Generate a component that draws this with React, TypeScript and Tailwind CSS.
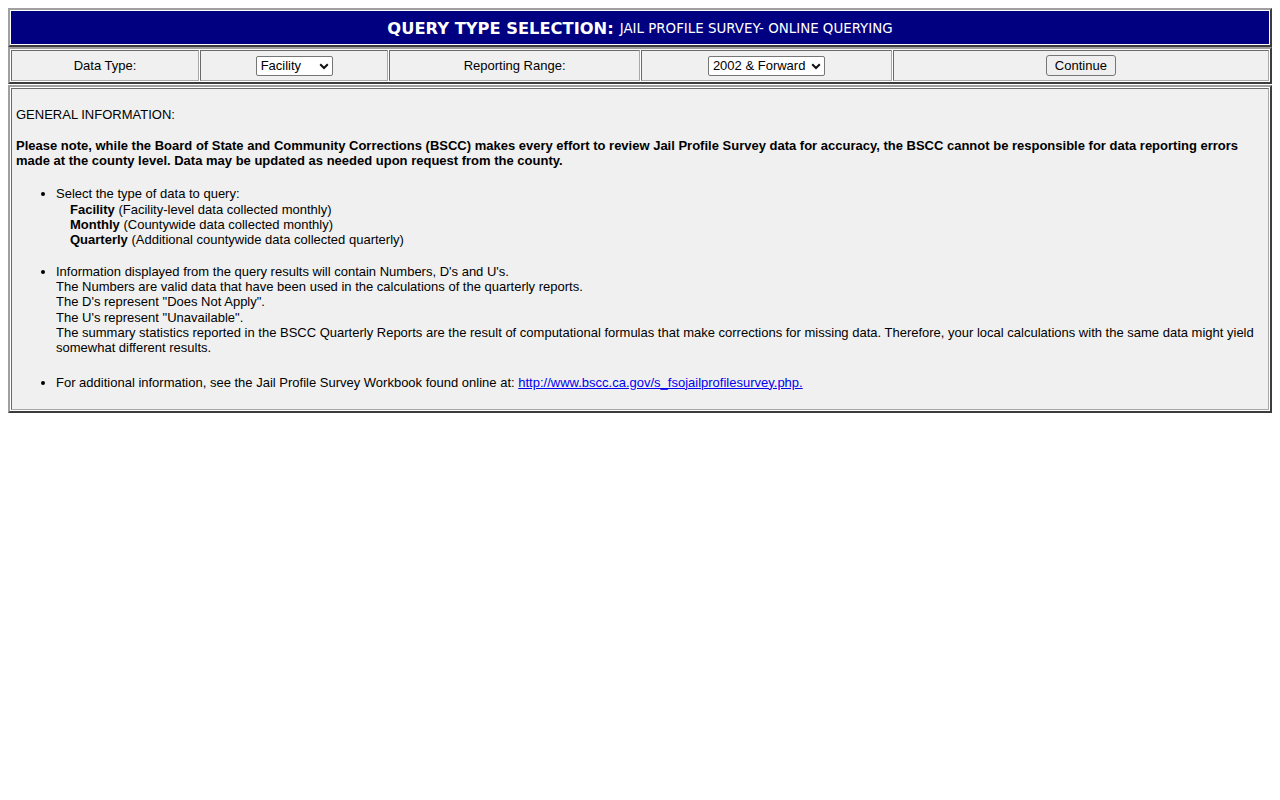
import React from "react";

const frame =
  "border-2 border-t-[#a0a0a0] border-l-[#a0a0a0] border-r-[#3c3c3c] border-b-[#3c3c3c] p-px";
const cell =
  "border border-t-[#6a6a6a] border-l-[#6a6a6a] border-r-[#a8a8a8] border-b-[#a8a8a8] bg-[#f0f0f0]";

function Chevron() {
  return (
    <svg width="10" height="7" viewBox="0 0 10 7" className="pointer-events-none absolute right-[4px] top-[7px]">
      <path d="M1.2 1.2 L5 5 L8.8 1.2" fill="none" stroke="#111" strokeWidth="2" />
    </svg>
  );
}

function Picker({ options, width }: { options: string[]; width: string }) {
  return (
    <div className={"relative h-[20px] " + width}>
      <select className="h-full w-full appearance-none rounded-[2px] border border-[#767676] bg-white pl-[4px] text-[13px] leading-[18px] text-black">
        {options.map((o) => (
          <option key={o}>{o}</option>
        ))}
      </select>
      <Chevron />
    </div>
  );
}

export default function App() {
  return (
    <div className="min-h-[800px] bg-white p-2 font-['Liberation_Sans',Arial,sans-serif] text-[13px] text-black">
      {/* title */}
      <div className={frame}>
        <div className="flex h-[33px] items-center justify-center border border-[#000080] bg-[#000080] pt-[3px] text-white font-['DejaVu_Sans',Verdana,sans-serif]">
          <span className="text-[16.3px] font-bold leading-none">QUERY TYPE SELECTION:</span>
          <span className="ml-[6px] text-[13.4px] leading-none">JAIL PROFILE SURVEY- ONLINE QUERYING</span>
        </div>
      </div>

      {/* query row */}
      <div className={frame + " grid grid-cols-[15fr_15fr_20fr_20fr_30fr] gap-px"}>
        <div className={cell + " flex h-[31px] items-center justify-center"}>Data Type:</div>
        <div className={cell + " flex h-[31px] items-center justify-center"}>
          <Picker options={["Facility", "Monthly", "Quarterly"]} width="w-[77px]" />
        </div>
        <div className={cell + " flex h-[31px] items-center justify-center"}>Reporting Range:</div>
        <div className={cell + " flex h-[31px] items-center justify-center"}>
          <Picker options={["2002 & Forward", "Prior to 2002"]} width="w-[117px]" />
        </div>
        <div className={cell + " flex h-[31px] items-center justify-center"}>
          <button className="h-[21px] w-[70px] rounded-[3px] border border-[#767676] bg-[#efefef] text-[13px] leading-none text-black">
            Continue
          </button>
        </div>
      </div>

      {/* general info */}
      <div className={frame + " mt-px"}>
        <div className={cell + " px-[4px] pt-[4px] pb-[19px] leading-[15.33px]"}>
          <p className="mt-[14px]">GENERAL INFORMATION:</p>
          <p className="mt-[16px] font-bold leading-[15px]">
            Please note, while the Board of State and Community Corrections (BSCC) makes every effort to review Jail
            Profile Survey data for accuracy, the BSCC cannot be responsible for data reporting errors made at the
            county level. Data may be updated as needed upon request from the county.
          </p>
          <ul className="mt-[18px] list-disc pl-[40px]">
            <li>
              Select the type of data to query:
              <div className="pl-[14px]">
                <b>Facility</b> (Facility-level data collected monthly)
              </div>
              <div className="pl-[14px]">
                <b>Monthly</b> (Countywide data collected monthly)
              </div>
              <div className="pl-[14px]">
                <b>Quarterly</b> (Additional countywide data collected quarterly)
              </div>
            </li>
            <li className="mt-[16px]">
              Information displayed from the query results will contain Numbers, D's and U's.
              <br />
              The Numbers are valid data that have been used in the calculations of the quarterly reports.
              <br />
              The D's represent "Does Not Apply".
              <br />
              The U's represent "Unavailable".
              <br />
              The summary statistics reported in the BSCC Quarterly Reports are the result of computational formulas
              that make corrections for missing data. Therefore, your local calculations with the same data might yield
              somewhat different results.
            </li>
            <li className="mt-[19px]">
              For additional information, see the Jail Profile Survey Workbook found online at:{" "}
              <a href="#" className="text-[#0000ee] underline">
                http://www.bscc.ca.gov/s_fsojailprofilesurvey.php.
              </a>
            </li>
          </ul>
        </div>
      </div>
    </div>
  );
}
